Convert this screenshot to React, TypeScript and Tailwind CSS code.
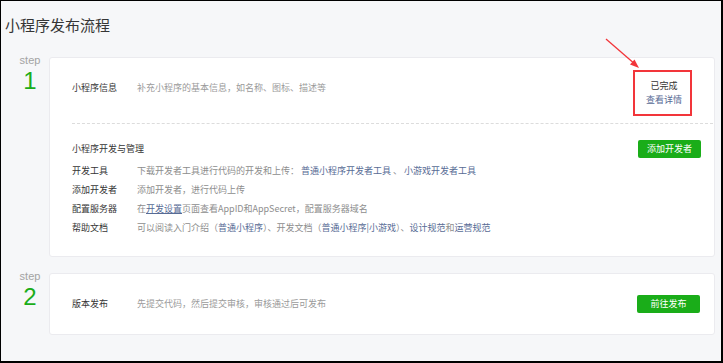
const font = { fontFamily: '"Noto Sans CJK SC", "Noto Sans", sans-serif' };

function StepLabel({ n }: { n: string }) {
  return (
    <div className="w-[48px] shrink-0 pl-[10px] text-center -mt-[3px] font-['Liberation_Sans',sans-serif]">
      <div className="text-[11px] leading-[13px] text-[#a3a3a3]">step</div>
      <div className="text-[24px] leading-[27px] text-[#1aad19]">{n}</div>
    </div>
  );
}

function Row({ label, children }: { label: string; children: React.ReactNode }) {
  return (
    <div className="flex h-[19px] items-center">
      <div className="w-[65px] shrink-0 text-[#353535]">{label}</div>
      <div className="text-[#8d8d8d] whitespace-nowrap">{children}</div>
    </div>
  );
}

const Link = ({ children }: { children: React.ReactNode }) => (
  <span className="text-[#576b95]">{children}</span>
);

export default function App() {
  return (
    <div
      style={font}
      className="relative w-[723px] h-[363px] overflow-hidden border-t border-l border-r-2 border-b-2 border-black bg-[#f6f7f9] text-[9px]"
    >
      <h1 className="pl-[4px] pt-[14px] text-[15px] leading-[20px] text-[#353535]">小程序发布流程</h1>

      <div className="mt-[22px] flex">
        <StepLabel n="1" />
        <div className="w-[666px] rounded-[3px] border border-[#ebebef] bg-white pl-[22px] pr-[1px]">
          <div className="flex items-start border-b border-dashed border-[#dcdcdc] pt-[21px] pb-[16px]">
            <div className="w-[65px] leading-[18px] text-[#353535]">小程序信息</div>
            <div className="leading-[18px] text-[#9a9a9a]">补充小程序的基本信息，如名称、图标、描述等</div>
            <div className="relative ml-auto mr-[29px] w-[40px] text-center leading-[14px]">
              <div className="text-[#353535]">已完成</div>
              <div className="text-[#576b95]">查看详情</div>
              <div className="absolute -left-[11px] -right-[8px] -top-[9px] -bottom-[9px] border-2 border-[#f2353a]" />
            </div>
          </div>

          <div className="pr-[12px] pt-[16px] pb-[19px]">
            <div className="flex h-[18px] items-center justify-between">
              <div className="text-[#353535]">小程序开发与管理</div>
              <button className="h-[18px] w-[63px] rounded-[2px] bg-[#1aad19] text-[9px] text-white">添加开发者</button>
            </div>
            <div className="mt-[3px]">
              <Row label="开发工具">
                下载开发者工具进行代码的开发和上传： <Link>普通小程序开发者工具</Link> 、 <Link>小游戏开发者工具</Link>
              </Row>
              <Row label="添加开发者">添加开发者，进行代码上传</Row>
              <Row label="配置服务器">
                在<span className="text-[#576b95] underline">开发设置</span>页面查看AppID和AppSecret，配置服务器域名
              </Row>
              <Row label="帮助文档">
                可以阅读入门介绍（<Link>普通小程序</Link>）、开发文档（<Link>普通小程序|小游戏</Link>）、<Link>设计规范</Link>和<Link>运营规范</Link>
              </Row>
            </div>
          </div>
        </div>
      </div>

      <div className="mt-[16px] flex">
        <StepLabel n="2" />
        <div className="flex h-[62px] w-[666px] items-center rounded-[3px] border border-[#ebebef] bg-white pl-[22px] pr-[14px]">
          <div className="w-[65px] text-[#353535]">版本发布</div>
          <div className="text-[#9a9a9a]">先提交代码，然后提交审核，审核通过后可发布</div>
          <button className="ml-auto h-[18px] w-[63px] rounded-[2px] bg-[#1aad19] text-[9px] text-white">前往发布</button>
        </div>
      </div>

      <svg className="absolute left-[600px] top-[33px]" width="44" height="40" viewBox="0 0 44 40">
        <line x1="5" y1="5" x2="35" y2="31" stroke="#f2353a" strokeWidth="1.3" />
        <polygon points="38,34 29,30.5 33.5,25.5" fill="#f2353a" />
      </svg>
    </div>
  );
}
